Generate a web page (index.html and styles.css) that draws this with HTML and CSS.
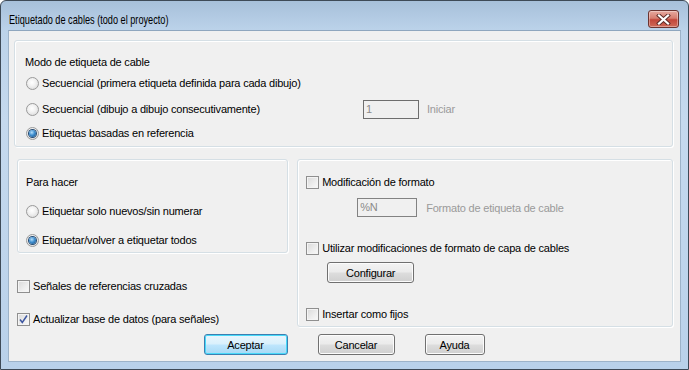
FILE: index.html
```html
<!DOCTYPE html>
<html lang="es">
<head>
  <meta charset="UTF-8">
  <title>Etiquetado de cables (todo el proyecto)</title>
  <link rel="stylesheet" href="styles.css">
</head>
<body>
  <div class="window">
    <div class="titlebar">
      <span class="title">Etiquetado de cables (todo el proyecto)</span>
      <button class="close-btn" title="Cerrar">
        <svg width="15" height="11" viewBox="0 0 15 11">
          <path d="M3 1.5 L12 9.5 M12 1.5 L3 9.5" stroke="#5a2a26" stroke-width="4" stroke-linecap="square"/>
          <path d="M3 1.5 L12 9.5 M12 1.5 L3 9.5" stroke="#ffffff" stroke-width="2.2" stroke-linecap="square"/>
        </svg>
      </button>
    </div>

    <div class="client">
      <div class="group group-mode">
        <div class="group-title">Modo de etiqueta de cable</div>
        <label class="option row-1"><span class="radio"></span>Secuencial (primera etiqueta definida para cada dibujo)</label>
        <div class="option-row row-2">
          <label class="option"><span class="radio"></span>Secuencial (dibujo a dibujo consecutivamente)</label>
          <span class="field field-start">1</span>
          <span class="muted">Iniciar</span>
        </div>
        <label class="option row-3"><span class="radio checked"></span>Etiquetas basadas en referencia</label>
      </div>

      <div class="middle">
        <div class="left-col">
          <div class="group group-todo">
            <div class="group-title">Para hacer</div>
            <label class="option todo-1"><span class="radio"></span>Etiquetar solo nuevos/sin numerar</label>
            <label class="option todo-2"><span class="radio checked"></span>Etiquetar/volver a etiquetar todos</label>
          </div>
          <label class="option check-row signals"><span class="checkbox"></span>Señales de referencias cruzadas</label>
          <label class="option check-row update"><span class="checkbox checked">
            <svg width="11" height="11" viewBox="0 0 11 11"><path d="M2 5.5 L4.3 8.5 L9 1.5" fill="none" stroke="#3d56a0" stroke-width="1.5"/></svg>
          </span>Actualizar base de datos (para señales)</label>
        </div>

        <div class="group group-format">
          <label class="option check-row fmt-1"><span class="checkbox"></span>Modificación de formato</label>
          <div class="field-row">
            <span class="field field-format">%N</span>
            <span class="muted">Formato de etiqueta de cable</span>
          </div>
          <label class="option check-row fmt-2"><span class="checkbox"></span>Utilizar modificaciones de formato de capa de cables</label>
          <button class="btn btn-config">Configurar</button>
          <label class="option check-row fmt-3"><span class="checkbox"></span>Insertar como fijos</label>
        </div>
      </div>

      <div class="buttons">
        <button class="btn btn-default btn-ok">Aceptar</button>
        <button class="btn btn-cancel">Cancelar</button>
        <button class="btn btn-help">Ayuda</button>
      </div>
    </div>
  </div>
</body>
</html>
```

FILE: styles.css
```css
* {
  box-sizing: border-box;
}
body {
  margin: 0;
  padding: 0;
  background-color: #ffffff;
  font-family: "Liberation Sans", Arial, sans-serif;
  font-size: 11px;
  letter-spacing: -0.2px;
  color: #000000;
}
.window {
  width: 689px;
  height: 370px;
  border: 1px solid #3e4a57;
  border-radius: 6px 6px 0 0;
  background: linear-gradient(to bottom, #a7c0da 0px, #bcd3ea 30px, #c5d9ee 120px, #b9d1ea 100%);
  padding: 0 7px 7px 7px;
  display: flex;
  flex-direction: column;
}
.titlebar {
  height: 29px;
  display: flex;
  align-items: flex-start;
  justify-content: space-between;
}
.title {
  font-family: "Liberation Sans", Arial, sans-serif;
  font-size: 13px;
  letter-spacing: 0;
  color: #000000;
  margin-left: 1px;
  margin-top: 11px;
  line-height: 15px;
  display: inline-block;
  white-space: nowrap;
  transform: scaleX(0.705);
  transform-origin: left center;
}
.close-btn {
  width: 31px;
  height: 18px;
  margin-top: 9px;
  margin-right: 2px;
  border: 1px solid #6b3430;
  border-radius: 3px;
  background: linear-gradient(to bottom, #e6a99f 0%, #d77e70 45%, #c2463a 55%, #cf6a58 100%);
  box-shadow: inset 0 0 0 1px rgba(255,255,255,0.35);
  padding: 0;
  display: flex;
  align-items: center;
  justify-content: center;
}
.client {
  flex: 1;
  background-color: #f0f0f0;
  padding: 10px 7px 0 5px;
  display: flex;
  flex-direction: column;
  border: 1px solid #9db3c9;
  border-top-color: #8fa6be;
}

/* group boxes */
.group {
  border: 1px solid #d5dfe5;
  border-radius: 3px;
  box-shadow: inset 1px 1px 0 #ffffff, 1px 1px 0 #ffffff;
}
.group-title {
  height: 20px;
  line-height: 20px;
}
.option {
  display: flex;
  align-items: center;
  height: 20px;
  white-space: nowrap;
}
.group-mode {
  height: 107px;
  padding: 11px 0 0 10px;
  margin-top: -1px;
}
.group-mode .row-1 {
  margin-top: 1px;
  margin-left: 1px;
}
.group-mode .row-2 {
  margin-top: 6px;
}
.group-mode .row-3 {
  margin-top: 4px;
  margin-left: 1px;
}
.option-row {
  display: flex;
  align-items: center;
  height: 20px;
}
.option-row .option {
  width: 337px;
  margin-left: 1px;
}
.field {
  display: inline-block;
  border: 1px solid #6e6e6e;
  height: 19px;
  line-height: 17px;
  padding-left: 2px;
  color: #8a8a8a;
  background-color: #f0f0f0;
}
.field-start {
  width: 56px;
}
.muted {
  color: #9a9a9a;
  margin-left: 8px;
}

/* radios and checkboxes */
.radio {
  width: 13px;
  height: 13px;
  border-radius: 50%;
  border: 1px solid #9a9a9a;
  background: radial-gradient(circle at 45% 40%, #ffffff 0%, #f2f2f2 40%, #d4d4d4 100%);
  margin-right: 3px;
  display: inline-flex;
  align-items: center;
  justify-content: center;
  flex-shrink: 0;
}
.radio.checked::after {
  content: "";
  width: 7px;
  height: 7px;
  border-radius: 50%;
  background: radial-gradient(circle at 40% 35%, #b7e0fb 0%, #3f8fd0 45%, #10457a 100%);
  box-shadow: 0 0 0 1px #244a72;
}
.checkbox {
  width: 13px;
  height: 13px;
  border: 1px solid #8f8f8f;
  background: linear-gradient(135deg, #d9d9d9 0%, #eeeeee 60%, #f9f9f9 100%);
  box-shadow: inset 0 0 0 1px #f4f4f4;
  margin-right: 3px;
  display: inline-flex;
  align-items: center;
  justify-content: center;
  flex-shrink: 0;
}

/* middle area */
.middle {
  display: flex;
  align-items: flex-start;
  margin-top: 12px;
}
.left-col {
  width: 272px;
  margin-left: 3px;
}
.group-todo {
  height: 94px;
  padding: 12px 0 0 8px;
}
.group-todo .todo-1 {
  margin-top: 9px;
}
.group-todo .todo-2 {
  margin-top: 9px;
}
.check-row {
  height: 18px;
}
.left-col .signals {
  margin-top: 24px;
}
.left-col .update {
  margin-top: 15px;
}
.group-format {
  width: 377px;
  height: 168px;
  margin-left: 9px;
  padding: 13px 0 0 8px;
}
.field-row {
  display: flex;
  align-items: center;
  margin-top: 7px;
  margin-left: 51px;
}
.field-format {
  width: 60px;
  border-color: #828282;
}
.group-format .muted {
  margin-left: 9px;
}
.group-format .fmt-2 {
  margin-top: 22px;
}
.btn {
  font-family: "Liberation Sans", Arial, sans-serif;
  font-size: 11px;
  letter-spacing: -0.2px;
  color: #000000;
  border: 1px solid #707070;
  border-radius: 3px;
  background: linear-gradient(to bottom, #f3f3f3 0%, #ebebeb 48%, #dddddd 52%, #cfcfcf 100%);
  box-shadow: inset 0 0 0 1px #fcfcfc;
  height: 21px;
  padding: 0;
}
.btn-config {
  display: block;
  width: 87px;
  margin-top: 5px;
  margin-left: 21px;
}
.group-format .fmt-3 {
  margin-top: 22px;
}

/* dialog buttons */
.buttons {
  display: flex;
  justify-content: center;
  gap: 30px;
  margin-top: 6px;
  padding-left: 1px;
}
.btn-default {
  border-color: #3c7fb1;
  box-shadow: inset 0 0 0 1px #48d9f9;
  background: linear-gradient(to bottom, #eaf6fd 0%, #d9f0fc 48%, #bee6fd 52%, #a7d9f5 100%);
}
.btn-ok {
  width: 84px;
}
.btn-cancel {
  width: 77px;
}
.btn-help {
  width: 60px;
}
```
